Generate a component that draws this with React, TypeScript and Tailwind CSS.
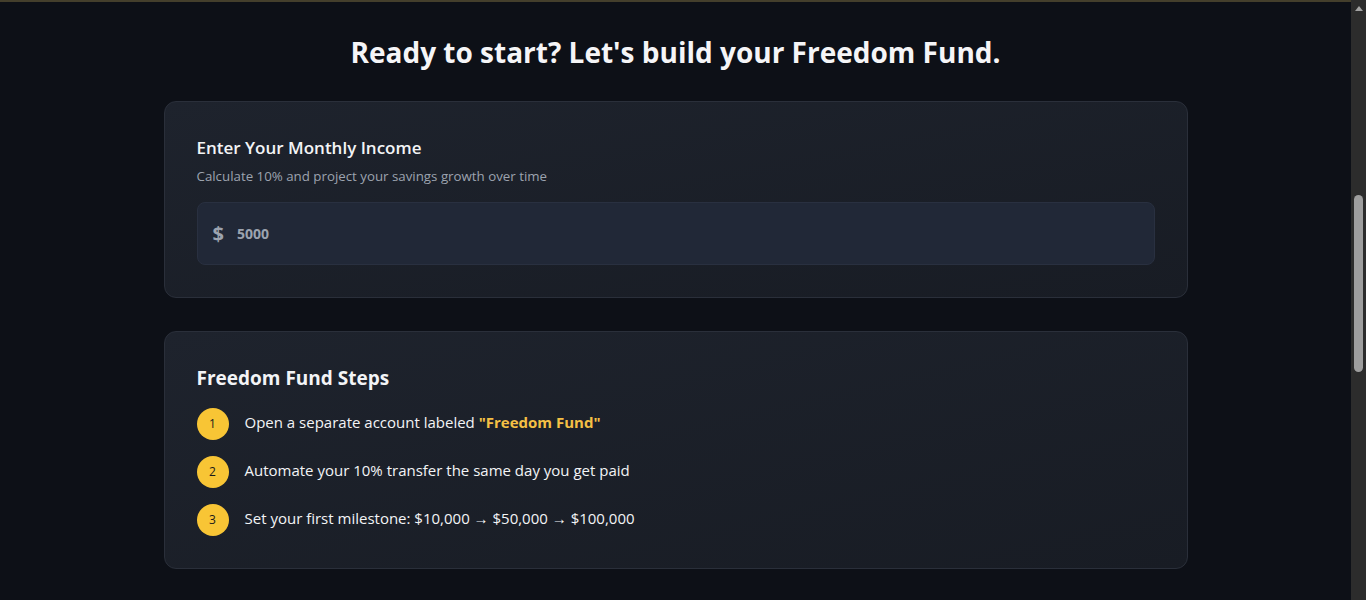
import { useState } from "react";

const steps = [
  { n: 1, text: "Open a separate account labeled ", highlight: "\"Freedom Fund\"" },
  { n: 2, text: "Automate your 10% transfer the same day you get paid" },
  { n: 3, text: "Set your first milestone: $10,000 → $50,000 → $100,000" },
];

function Scrollbar() {
  return (
    <div className="flex h-screen w-[15px] shrink-0 flex-col items-center bg-[#2c2c2c]">
      <div className="mt-[6px] h-0 w-0 border-x-[4px] border-b-[5px] border-x-transparent border-b-[#a3a3a3]" />
      <div className="mt-[184px] h-[177px] w-[9px] rounded-full bg-[#9e9e9e]" />
    </div>
  );
}

export default function App() {
  const [income, setIncome] = useState("");

  return (
    <div className="flex h-screen overflow-hidden bg-[#0d1017] font-['Open_Sans','Noto_Sans',sans-serif] text-white">
      <main className="flex-1 border-t-2 border-[#443f2c]">
        <section className="mx-auto max-w-5xl pt-8">
          <h2 className="text-center text-[28px] leading-9 font-bold text-[#f5f5f7]">
            Ready to start? Let's build your Freedom Fund.
          </h2>

          <div className="mt-[31px] rounded-xl border border-[#2a2f3a] bg-gradient-to-br from-[#1e232d] to-[#181c24] p-8">
            <h3 className="text-[17px] leading-7 font-semibold text-[#f3f4f6]">Enter Your Monthly Income</h3>
            <p className="mt-1 text-[13.3px] leading-5 text-[#9ca3af]">
              Calculate 10% and project your savings growth over time
            </p>
            <div className="mt-4 flex h-[63px] items-center rounded-lg border border-[#293040] bg-[#212837] px-[15px]">
              <span className="text-xl font-bold text-[#9ca3af]">$</span>
              <input
                value={income}
                onChange={(e) => setIncome(e.target.value)}
                placeholder="5000"
                className="ml-[13px] w-full bg-transparent text-sm font-bold text-[#e5e7eb] outline-none placeholder:text-[#9ca3af]"
              />
            </div>
          </div>

          <div className="mt-[33px] rounded-xl border border-[#2a2f3a] bg-gradient-to-br from-[#1e232d] to-[#181c24] p-8">
            <h3 className="text-[19px] leading-7 font-bold text-[#f3f4f6]">Freedom Fund Steps</h3>
            <div className="mt-4 space-y-4">
              {steps.map((s) => (
                <div key={s.n} className="flex items-center gap-4">
                  <div className="flex h-8 w-8 shrink-0 items-center justify-center rounded-full bg-[#f8c535] text-xs text-[#1a1a1a]">
                    {s.n}
                  </div>
                  <p className="pb-1 text-[15px] text-[#f3f4f6]">
                    {s.text}
                    {s.highlight && <span className="font-bold text-[#f5c045]">{s.highlight}</span>}
                  </p>
                </div>
              ))}
            </div>
          </div>
        </section>
      </main>
      <Scrollbar />
    </div>
  );
}
